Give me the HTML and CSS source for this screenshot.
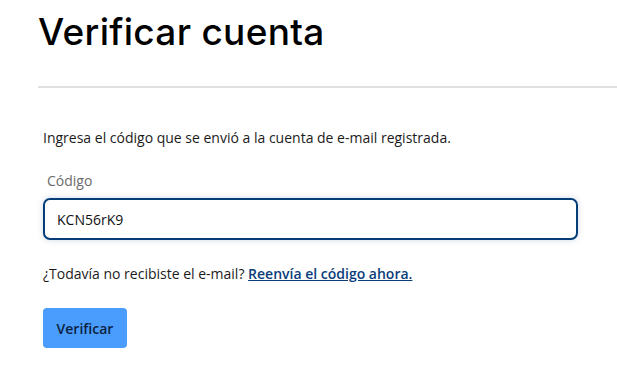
FILE: index.html
```html
<!DOCTYPE html>
<html lang="es">
<head>
<meta charset="utf-8">
<link rel="stylesheet" href="styles.css">
</head>
<body>
<main class="page">
  <h1 class="title">Verificar cuenta</h1>
  <hr class="divider">
  <section class="content">
    <p class="intro">Ingresa el código que se envió a la cuenta de e-mail registrada.</p>
    <label class="label" for="code">Código</label>
    <input class="input" id="code" type="text" value="KCN56rK9">
    <p class="resend">¿Todavía no recibiste el e-mail? <a class="link" href="#">Reenvía el código ahora.</a></p>
    <button class="btn" type="button">Verificar</button>
  </section>
</main>
</body>
</html>
```
FILE: styles.css
```css
html, body { margin: 0; padding: 0; background: #fff; }
body { font-family: "Open Sans", "Liberation Sans", sans-serif; color: #1a1a1a; }
.page { padding: 10px 0 0 38px; }
.title {
  margin: 0;
  font-family: "Inter", "Lato", sans-serif;
  font-weight: 500;
  font-size: 37px;
  line-height: 44px;
  letter-spacing: 0.3px;
  color: #000;
}
.divider {
  margin: 32px 0 0 0;
  border: 0;
  height: 2px;
  background: #e0e0e0;
}
.content { padding: 0 0 0 5px; display: flex; flex-direction: column; align-items: flex-start; }
.intro { margin: 40px 0 0 0; font-size: 14px; line-height: 20px; color: #1b1b1b; }
.label { margin: 23px 0 0 4px; font-size: 14px; line-height: 20px; color: #6b6b6b; }
.input {
  margin-top: 7px;
  box-sizing: border-box;
  width: 535px;
  height: 42px;
  padding: 0 12px;
  border: 2px solid #053d78;
  border-radius: 7px;
  box-shadow: 0 0 6px rgba(5, 61, 120, 0.2);
  font-family: "Open Sans", sans-serif;
  font-size: 14px;
  color: #111;
  outline: none;
}
.resend { margin: 24px 0 0 0; font-size: 14px; line-height: 20px; color: #1b1b1b; }
.link { color: #0b3d7a; font-weight: 600; text-decoration: underline; }
.btn {
  margin-top: 24px;
  width: 84px;
  height: 40px;
  border: 0;
  border-radius: 4px;
  background: #4a9dfc;
  color: #0d2240;
  font-family: "Open Sans", sans-serif;
  font-weight: 600;
  font-size: 14px;
}
```
